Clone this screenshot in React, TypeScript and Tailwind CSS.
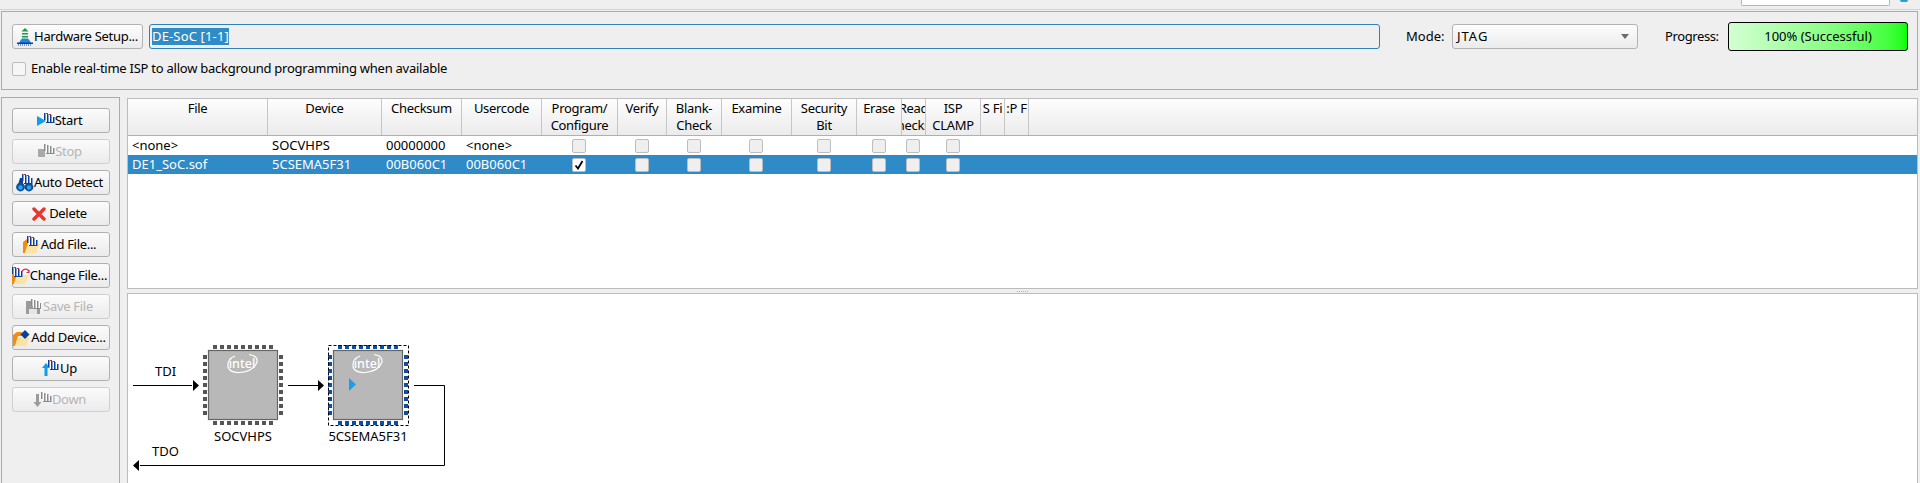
import React from "react";

const FONT = "font-['Noto_Sans',sans-serif]";

// little "hand" stripes used on most programmer toolbar icons
const Stripes = ({ x, y, dim }: { x: number; y: number; dim?: boolean }) => {
  const c = dim ? "#8a8a8a" : "#0b3f9c";
  return (
    <g transform={`translate(${x} ${y})`}>
      <path d="M0 0h3v1h3v2h3v2h2v5H2V7H0z" fill="#fff" />
      <path d="M0 0h1.500v7H0zM3 1h1.500v8H3zM6 2h1.500v7H6zM9 4h1.500v6H9zM2 9h8.500v1H2z" fill={c} />
      {!dim && <path d="M2 0.500h2M5 1.500h2" stroke="#e0262c" strokeWidth="1" />}
    </g>
  );
};

const Svg = ({ w = 18, children }: { w?: number; children: React.ReactNode }) => (
  <svg width={w} height="18" viewBox={`0 0 ${w} 18`} className="shrink-0">
    {children}
  </svg>
);

const StartIcon = () => (
  <Svg>
    <path d="M0 4l9 5-9 5z" fill="#0f9fe8" />
    <Stripes x={7} y={1} />
  </Svg>
);

const StopIcon = () => (
  <Svg>
    <rect x="1" y="6" width="7" height="8" fill="#a9a9a9" />
    <Stripes x={7} y={1} dim />
  </Svg>
);

const DetectIcon = () => (
  <Svg>
    <path d="M2 11l2-7h3v7zM10 11V4h3l3 7z" fill="#0b3f9c" />
    <circle cx="4.500" cy="13" r="4.400" fill="#0b4f9e" />
    <circle cx="13" cy="13" r="4.400" fill="#0b4f9e" />
    <circle cx="4.500" cy="13.500" r="2.200" fill="#2fa6e6" />
    <circle cx="13" cy="13.500" r="2.200" fill="#2fa6e6" />
    <Stripes x={6} y={0} />
  </Svg>
);

const DeleteIcon = () => (
  <svg width="14" height="14" viewBox="0 0 14 14" className="shrink-0">
    <path d="M2 2l10 10M12 2L2 12" stroke="#e8352e" strokeWidth="3.400" strokeLinecap="round" />
  </svg>
);

const Folder = () => (
  <>
    <path d="M0 6L4 3h5v4H5L2 17H0z" fill="#f58a0b" />
    <path d="M2 17L5 8h12l-4 9z" fill="#fde3a0" />
  </>
);

const AddFileIcon = () => (
  <Svg>
    <Folder />
    <Stripes x={4} y={0} />
  </Svg>
);

const ChangeFileIcon = () => (
  <Svg>
    <Folder />
    <Stripes x={0} y={0} />
    <path d="M10 4q3-3 6-1l1 2M17 3v2.500h-2.500" fill="none" stroke="#d92b54" strokeWidth="1.200" />
  </Svg>
);

const SaveIcon = () => (
  <Svg w={15}>
    <path d="M0 3h11l3 2v11H0z" fill="#9b9b9b" />
    <rect x="3" y="11" width="8" height="5" fill="#e6e6e6" />
    <Stripes x={5} y={1} dim />
  </Svg>
);

const AddDeviceIcon = () => (
  <Svg>
    <Folder />
    <path d="M12 1l4.500 4.500L12 10 7.500 5.500z" fill="#0b3f9c" />
  </Svg>
);

const UpIcon = () => (
  <Svg>
    <path d="M4 3l4 5H5.500v8h-3V8H0z" fill="#0f9fe8" />
    <Stripes x={6} y={0} />
  </Svg>
);

const DownIcon = () => (
  <Svg w={19}>
    <path d="M3 3h3v8h2.500l-4 5-4-5H3z" fill="#9b9b9b" />
    <Stripes x={8} y={1} dim />
  </Svg>
);

const HardwareIcon = () => (
  <svg width="16" height="18" viewBox="0 0 16 18" className="shrink-0">
    <path d="M8 0l3.500 3.500h-7z" fill="#1f9a3c" />
    <path d="M5 5h6v1.500H5zM5 8h6v1.500H5z" fill="#1f9a3c" />
    <path d="M5 10.500h6q2 2 3 5H2q1-3 3-5z" fill="#1f86d8" />
    <rect x="0" y="14.500" width="16" height="1.500" fill="#0b3f9c" />
    <path d="M1 17h14" stroke="#0b3f9c" strokeDasharray="1 1" />
  </svg>
);

const sideButtons = [
  { label: "Start", icon: <StartIcon /> },
  { label: "Stop", icon: <StopIcon />, disabled: true },
  { label: "Auto Detect", icon: <DetectIcon /> },
  { label: "Delete", icon: <DeleteIcon />, gap: "gap-[3px]" },
  { label: "Add File...", icon: <AddFileIcon /> },
  { label: "Change File...", icon: <ChangeFileIcon /> },
  { label: "Save File", icon: <SaveIcon />, disabled: true, gap: "gap-[2px]" },
  { label: "Add Device...", icon: <AddDeviceIcon /> },
  { label: "Up", icon: <UpIcon /> },
  { label: "Down", icon: <DownIcon />, disabled: true },
];

const columns: { title: React.ReactNode; w: string }[] = [
  { title: "File", w: "w-[140px]" },
  { title: "Device", w: "w-[114px]" },
  { title: "Checksum", w: "w-[80px]" },
  { title: "Usercode", w: "w-[80px]" },
  { title: <>Program/<br />Configure</>, w: "w-[76px]" },
  { title: "Verify", w: "w-[49px]" },
  { title: <>Blank-<br />Check</>, w: "w-[55px]" },
  { title: "Examine", w: "w-[70px]" },
  { title: <>Security<br />Bit</>, w: "w-[65px]" },
  { title: "Erase", w: "w-[45px]" },
  { title: <>Read<br /><span className="inline-block pr-[8px]">Checks</span></>, w: "w-[24px]" },
  { title: <>ISP<br />CLAMP</>, w: "w-[55px]" },
  { title: "S Fi", w: "w-[24px]" },
  { title: ":P F", w: "w-[24px]" },
];

const Check = ({ on, className = "" }: { on?: boolean; className?: string }) => (
  <span
    className={`flex h-[14px] w-[14px] items-center justify-center rounded-[2px] border border-[#bdbdbd] ${on ? "bg-white" : "bg-[#efefef]"} ${className}`}
  >
    {on && (
      <svg width="10" height="10" viewBox="0 0 10 10">
        <path d="M1.500 5.500L4 8.500L8.500 1" fill="none" stroke="#000" strokeWidth="1.800" />
      </svg>
    )}
  </span>
);

const Row = ({
  file,
  device,
  sum,
  code,
  checked,
  selected,
}: {
  file: string;
  device: string;
  sum: string;
  code: string;
  checked?: boolean;
  selected?: boolean;
}) => (
  <div className={`flex h-[19px] items-center ${selected ? "bg-[#2f8bc7] text-white" : "text-black"}`}>
    {[file, device, sum, code].map((t, i) => (
      <span key={i} className={`${columns[i].w} shrink-0 pl-[4px] whitespace-nowrap`}>
        {t}
      </span>
    ))}
    <span className="-ml-px flex">
      {columns.slice(4, 12).map((c, i) => (
        <span key={i} className={`${c.w} flex shrink-0 justify-center`}>
          <Check on={checked && i === 0} />
        </span>
      ))}
    </span>
  </div>
);

const pins = [0, 1, 2, 3, 4, 5, 6, 7, 8];

const Chip = ({ x, name, active }: { x: number; name: string; active?: boolean }) => {
  const pin = active ? "#0b4ea2" : "#555555";
  return (
    <g>
      {pins.map((i) => (
        <g key={i} fill={pin}>
          <rect x={x + 5 + i * 7} y="344" width="4" height="4" />
          <rect x={x + 5 + i * 7} y="420" width="4" height="4" />
          <rect x={x - 5} y={354 + i * 7} width="4" height="4" />
          <rect x={x + 71} y={354 + i * 7} width="4" height="4" />
        </g>
      ))}
      <rect x={x + 0.5} y="349.500" width="69" height="69" fill="#b8b8b8" stroke="#666" strokeWidth="1.200" />
      <text x={x + 34} y="366.500" textAnchor="middle" fontSize="12.500" fontWeight="500" fill="#fff">
        intel
      </text>
      <path
        d={`M${x + 27} 355Q${x + 19} 358 ${x + 20} 366Q${x + 22} 372 ${x + 32} 371.500Q${x + 46} 370 ${x + 49} 361Q${x + 50} 355 ${x + 41} 353.500`}
        fill="none"
        stroke="#fff"
        strokeWidth="1.200"
      />
      <text x={x + 35} y="440" textAnchor="middle" fontSize="13" fill="#000">
        {name}
      </text>
    </g>
  );
};

const Diagram = () => (
  <svg width="340" height="189" viewBox="128 293 340 189" className="block">
    <path d="M133 384.500H192M288 384.500H318M414 384.500H444.500V464.500H140" fill="none" stroke="#000" strokeWidth="1" />
    <path d="M193 379l6 5.500-6 5.500zM318 379l6 5.500-6 5.500zM139 459l-6 5.500 6 5.500z" fill="#000" />
    <text x="155" y="375" fontSize="13" fill="#000">TDI</text>
    <text x="152" y="455" fontSize="13" fill="#000">TDO</text>
    <Chip x={208} name="SOCVHPS" />
    <Chip x={333} name="5CSEMA5F31" active />
    <rect x="328.500" y="344.500" width="80" height="80" fill="none" stroke="#000" strokeDasharray="3 2" />
    <path d="M349 377l7 6.500-7 6.500z" fill="#1a9fee" />
  </svg>
);

export default function App() {
  return (
    <div className={`${FONT} flex h-[483px] w-[1920px] flex-col overflow-hidden bg-[#efefef] text-[13px] leading-[17px] text-black`}>
      <div className="flex h-[10px] shrink-0 items-start border-b border-[#d4d4d4]">
        <div className="ml-[1741px] h-[6px] w-[149px] rounded-b-[2px] border border-t-0 border-[#b5b5b5] bg-white" />
        <div className="ml-[10px] h-[2px] w-[8px] rounded-b-full bg-[#2f9bd8]" />
      </div>

      <div className="ml-px mr-[2px] mt-px flex h-[79px] shrink-0 flex-col border border-[#ababab] pl-[10px] pt-[12px]">
        <div className="flex h-[25px] items-center">
          <button className="flex h-[25px] w-[131px] items-center justify-center rounded-[3px] border border-[#b3b3b3] bg-gradient-to-b from-[#fdfdfd] to-[#ebebeb]">
            <HardwareIcon />
            <span className="ml-[1px] tracking-[-0.3px] whitespace-nowrap">Hardware Setup...</span>
          </button>
          <div className="ml-[6px] flex h-[25px] w-[1231px] items-center rounded-[3px] border border-[#2f7fb8] bg-[#efefef] pl-[2px]">
            <span className="bg-[#308cc6] tracking-[0.15px] text-white">DE-SoC [1-1]</span>
          </div>
          <span className="ml-[26px] w-[46px]">Mode:</span>
          <div className="flex h-[25px] w-[186px] items-center justify-between rounded-[3px] border border-[#b3b3b3] bg-gradient-to-b from-[#fdfdfd] to-[#ebebeb] px-[4px]">
            <span className="tracking-[1px]">JTAG</span>
            <svg width="9" height="6" viewBox="0 0 9 6" className="mr-[3px]">
              <path d="M0 0h8L4 5z" fill="#6b6b6b" />
            </svg>
          </div>
          <span className="ml-[27px] w-[63px] tracking-[-0.4px]">Progress:</span>
          <div className="flex h-[29px] w-[180px] items-center justify-center rounded-[3px] border border-black bg-gradient-to-r from-[#d2ffd2] to-[#00ff00]">
            100% (Successful)
          </div>
        </div>
        <label className="mt-[11px] flex items-center">
          <Check className="bg-[#f6f6f6]" />
          <span className="ml-[5px] tracking-[-0.25px] whitespace-nowrap">Enable real-time ISP to allow background programming when available</span>
        </label>
      </div>

      <div className="mt-[7px] flex min-h-0 flex-1 pl-px">
        <div className="flex w-[119px] shrink-0 flex-col gap-[6px] border border-b-0 border-[#ababab] pl-[10px] pt-[10px]">
          {sideButtons.map((b) => (
            <button
              key={b.label}
              className={`flex h-[25px] w-[98px] shrink-0 items-center justify-center rounded-[3px] border bg-gradient-to-b from-[#fbfbfb] to-[#ebebeb] pr-[3px] ${b.gap ?? ""} ${b.disabled ? "border-[#cfcfcf] text-[#b5b5b5]" : "border-[#b0b0b0]"}`}
            >
              {b.icon}
              <span className="tracking-[-0.3px] whitespace-nowrap">{b.label}</span>
            </button>
          ))}
        </div>

        <div className="ml-[7px] flex min-w-0 flex-1 flex-col pr-[2px] pt-px">
          <div className="h-[191px] shrink-0 border border-[#bcbcbc] bg-white">
            <div className="flex h-[37px] border-b border-[#b0b0b0] bg-gradient-to-b from-[#fdfdfd] to-[#ebebeb]">
              {columns.map((c, i) => (
                <div
                  key={i}
                  className={`${c.w} flex shrink-0 justify-center overflow-hidden border-r border-[#c6c6c6] pt-[1px] text-center tracking-[-0.3px] whitespace-nowrap`}
                >
                  <span className="shrink-0">{c.title}</span>
                </div>
              ))}
            </div>
            <Row file="<none>" device="SOCVHPS" sum="00000000" code="<none>" />
            <Row file="DE1_SoC.sof" device="5CSEMA5F31" sum="00B060C1" code="00B060C1" checked selected />
          </div>
          <div className="flex h-[4px] shrink-0 items-center justify-center gap-px">
            {[0, 1, 2, 3, 4, 5].map((i) => (
              <span key={i} className="h-px w-px bg-[#b0b0b0]" />
            ))}
          </div>
          <div className="min-h-0 flex-1 border border-b-0 border-[#bcbcbc] bg-white">
            <Diagram />
          </div>
        </div>
      </div>
    </div>
  );
}
